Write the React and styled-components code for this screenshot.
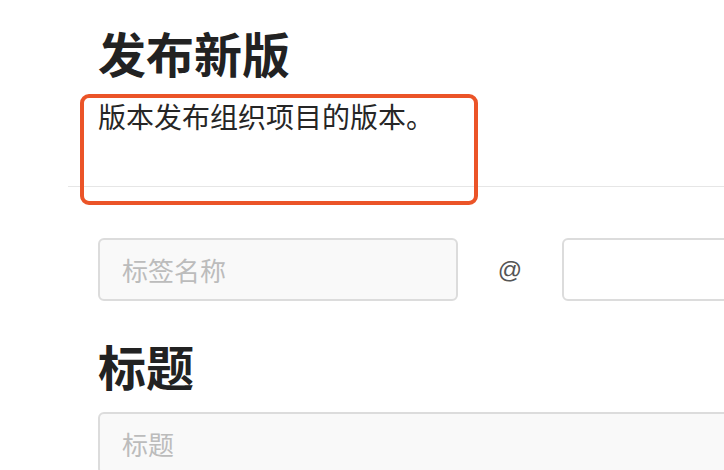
import styled, { createGlobalStyle } from 'styled-components';

const GlobalStyle = createGlobalStyle`
  html, body {
    margin: 0;
    padding: 0;
    background: #fff;
    overflow: hidden;
  }
  body {
    font-family: "Noto Sans CJK SC", "Noto Sans", sans-serif;
    color: #333;
  }
`

const Page = styled.div`
  width: 1000px;
  padding-left: 68px;
  box-sizing: border-box;
`

const Header = styled.div`
  position: relative;
  padding: 24px 0 53px 30px;
  border-bottom: 1px solid #e6e6e6;
`

const Title = styled.h1`
  margin: 0;
  font-size: 48px;
  line-height: 1.2;
  font-weight: 700;
  color: #222;
`

const Description = styled.p`
  margin: 18px 0 0 0;
  font-size: 28px;
  line-height: 1.2;
  color: #262626;
`

const Annotation = styled.div`
  position: absolute;
  left: 12px;
  top: 94px;
  width: 398px;
  height: 111px;
  box-sizing: border-box;
  border: 4px solid #eb5428;
  border-radius: 9px;
  pointer-events: none;
`

const Form = styled.div`
  padding: 51px 0 0 30px;
`

const TagRow = styled.div`
  display: flex;
  align-items: center;
`

const Input = styled.div`
  display: flex;
  align-items: center;
  box-sizing: border-box;
  height: 63px;
  width: ${p => p.$width || 'auto'};
  flex: ${p => p.$width ? 'none' : 1};
  padding: 0 22px;
  border: 2px solid #dcdcdc;
  border-radius: 6px;
  background: ${p => p.$blank ? '#fff' : '#f9f9f9'};
  font-size: 26px;
  color: #bcbcbc;
`

const At = styled.div`
  width: 104px;
  text-align: center;
  font-family: "Liberation Sans", Arial, sans-serif;
  font-size: 24px;
  color: #555;
`

const SectionTitle = styled.h2`
  margin: 36px 0 17px 0;
  font-size: 48px;
  line-height: 1.2;
  font-weight: 700;
  color: #222;
`

export default function App() {
  return (
    <Page>
      <GlobalStyle />
      <Header>
        <Title>发布新版</Title>
        <Description>版本发布组织项目的版本。</Description>
        <Annotation />
      </Header>
      <Form>
        <TagRow>
          <Input $width="360px">标签名称</Input>
          <At>@</At>
          <Input $blank />
        </TagRow>
        <SectionTitle>标题</SectionTitle>
        <Input>标题</Input>
      </Form>
    </Page>
  );
}
